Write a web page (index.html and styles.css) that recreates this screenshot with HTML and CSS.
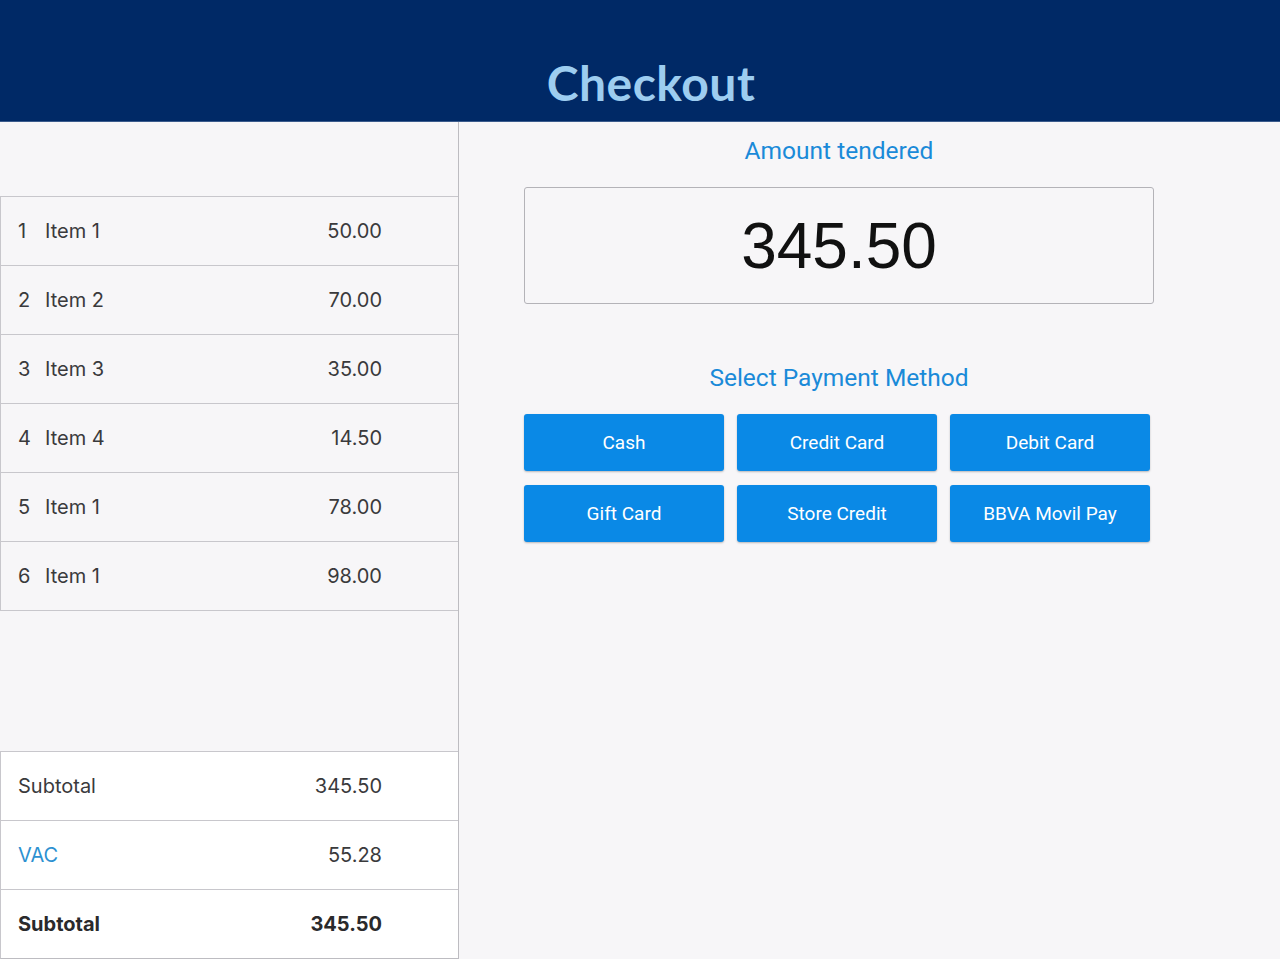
FILE: index.html
```html
<!DOCTYPE html>
<html lang="en">
<head>
    <meta charset="UTF-8">
    <meta name="viewport" content="width=device-width, initial-scale=1.0">
    <title>Checkout</title>
    <link rel="stylesheet" href="styles.css">
</head>
<body>
    <header class="topbar">
        <h1>Checkout</h1>
    </header>

    <div class="main">
        <aside class="cart">
            <div class="cart-top"></div>

            <div class="items">
                <div class="row"><span class="num">1</span><span class="name">Item 1</span><span class="amount">50.00</span></div>
                <div class="row"><span class="num">2</span><span class="name">Item 2</span><span class="amount">70.00</span></div>
                <div class="row"><span class="num">3</span><span class="name">Item 3</span><span class="amount">35.00</span></div>
                <div class="row"><span class="num">4</span><span class="name">Item 4</span><span class="amount">14.50</span></div>
                <div class="row"><span class="num">5</span><span class="name">Item 1</span><span class="amount">78.00</span></div>
                <div class="row"><span class="num">6</span><span class="name">Item 1</span><span class="amount">98.00</span></div>
            </div>

            <div class="totals">
                <div class="row"><span class="name">Subtotal</span><span class="amount">345.50</span></div>
                <div class="row"><span class="name tax">VAC</span><span class="amount">55.28</span></div>
                <div class="row grand"><span class="name">Subtotal</span><span class="amount">345.50</span></div>
            </div>
        </aside>

        <section class="payment">
            <div class="payment-inner">
                <h2>Amount tendered</h2>
                <div class="tendered">345.50</div>

                <h2 class="method-title">Select Payment Method</h2>
                <div class="methods">
                    <button>Cash</button>
                    <button>Credit Card</button>
                    <button>Debit Card</button>
                    <button>Gift Card</button>
                    <button>Store Credit</button>
                    <button>BBVA Movil Pay</button>
                </div>
            </div>
        </section>
    </div>
</body>
</html>
```

FILE: styles.css
```css
* {
    box-sizing: border-box;
}
body {
    margin: 0;
    font-family: Inter, Roboto, "Liberation Sans", sans-serif;
    background-color: #f7f6f8;
    color: #333;
    height: 959px;
    display: flex;
    flex-direction: column;
}
.topbar {
    height: 122px;
    background-color: #002966;
    border-bottom: 1px solid #3b5b8c;
    display: flex;
    align-items: flex-end;
    justify-content: center;
    padding-left: 22px;
}
.topbar h1 {
    margin: 0 0 10px;
    font-family: Lato, "Open Sans", sans-serif;
    font-weight: 700;
    font-size: 48px;
    line-height: 56px;
    color: #9dcdf0;
    letter-spacing: 0.5px;
}
.main {
    flex: 1;
    display: flex;
    min-height: 0;
}
.cart {
    width: 459px;
    border-right: 1px solid #bdbcc1;
    display: flex;
    flex-direction: column;
}
.cart-top {
    height: 75px;
    border-bottom: 1px solid #c8c7cc;
}
.items {
    flex: 1;
}
.row {
    height: 69px;
    display: flex;
    align-items: center;
    padding: 0 76px 0 17px;
    font-size: 20px;
    color: #3a3a3c;
    border-bottom: 1px solid #c8c7cc;
    border-left: 1px solid #c8c7cc;
}
.row .num {
    width: 27px;
}
.row .name {
    flex: 1;
}
.row .amount {
    text-align: right;
}
.totals {
    background: #fff;
    border-top: 1px solid #c8c7cc;
}
.totals .row {
    height: 69px;
}
.totals .row:last-child {
    border-bottom: 1px solid #bdbcc1;
}
.row .tax {
    color: #2c91d1;
}
.row.grand {
    font-weight: 700;
    color: #2a2a2c;
}
.payment {
    flex: 1;
    padding: 12px 0 0 65px;
}
.payment-inner {
    width: 630px;
    display: flex;
    flex-direction: column;
    align-items: center;
}
.payment h2 {
    margin: 0;
    font-family: Roboto, Inter, sans-serif;
    font-weight: 400;
    font-size: 24.5px;
    line-height: 34px;
    color: #1a8ad8;
}
.tendered {
    margin-top: 19px;
    width: 630px;
    height: 117px;
    border: 1px solid #b4b3b8;
    border-radius: 3px;
    display: flex;
    align-items: center;
    justify-content: center;
    font-family: "Liberation Sans", Arial, sans-serif;
    font-size: 64px;
    color: #111;
}
.method-title {
    margin-top: 57px !important;
}
.methods {
    margin-top: 19px;
    display: grid;
    grid-template-columns: repeat(3, 200px);
    column-gap: 13px;
    row-gap: 14px;
    width: 626px;
    align-self: flex-start;
}
.methods button {
    height: 57px;
    border: none;
    border-radius: 3px;
    background-color: #0a89e6;
    color: #fff;
    font-family: Roboto, Inter, sans-serif;
    font-size: 19px;
    box-shadow: 0 1px 2px rgba(0,0,0,0.25);
    cursor: pointer;
}
.methods button:hover {
    background-color: #0874c4;
}
```
